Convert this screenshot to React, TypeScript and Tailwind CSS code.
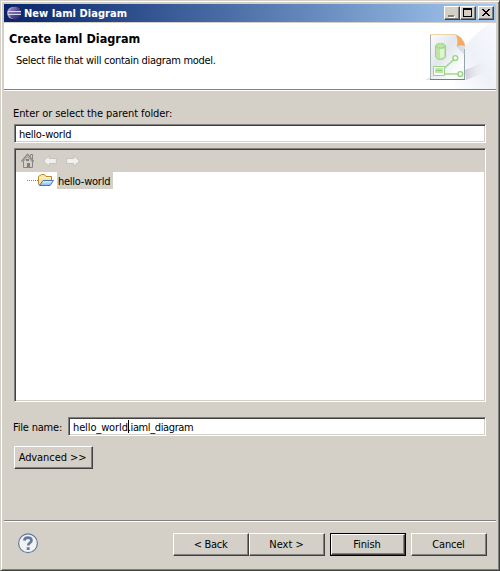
import React from "react";

const raised =
  "border border-t-white border-l-white border-r-[#404040] border-b-[#404040] shadow-[inset_-1px_-1px_0_#808080] bg-[#d4d0c8]";
const sunken =
  "border border-t-[#808080] border-l-[#808080] border-r-white border-b-white shadow-[inset_1px_1px_0_#404040,inset_-1px_-1px_0_#d4d0c8] bg-white";

function EclipseLogo() {
  return (
    <svg width="15" height="14" viewBox="0 0 15 14">
      <defs>
        <linearGradient id="orb" x1="0" y1="0" x2="1" y2="1">
          <stop offset="0" stopColor="#a596cc" />
          <stop offset="0.5" stopColor="#54498f" />
          <stop offset="1" stopColor="#292560" />
        </linearGradient>
      </defs>
      <ellipse cx="5.8" cy="7" rx="5.8" ry="6" fill="#b79bc4" />
      <ellipse cx="8" cy="7" rx="6" ry="6.2" fill="url(#orb)" />
      <path d="M1 5.5H14M1 8.5H14" stroke="#d5d7ec" />
      <path d="M2 7H14" stroke="#8580b4" />
    </svg>
  );
}

function WizardBanner() {
  return (
    <svg width="96" height="66" viewBox="400 23 96 66">
      <defs>
        <linearGradient id="sweep" x1="0" y1="1" x2="1" y2="0">
          <stop offset="0" stopColor="#fff" />
          <stop offset="0.5" stopColor="#eef1f8" />
          <stop offset="1" stopColor="#f9faff" />
        </linearGradient>
        <linearGradient id="sheet" x1="0" y1="0" x2="1" y2="1">
          <stop offset="0" stopColor="#fafbfa" />
          <stop offset="0.4" stopColor="#e2e7ee" />
          <stop offset="0.8" stopColor="#fcfdfd" />
          <stop offset="1" stopColor="#eef5f5" />
        </linearGradient>
        <linearGradient id="cast" x1="0" y1="0" x2="1" y2="0">
          <stop offset="0" stopColor="#d2cddd" />
          <stop offset="1" stopColor="#eff1f8" stopOpacity="0" />
        </linearGradient>
      </defs>
      <path d="M496 23H491Q477 31 465 46L452 89H496Z" fill="url(#sweep)" />
      <path d="M465 70L482 63Q492 64 484 73L466 80Z" fill="url(#cast)" />
      <path d="M425 80L431 77V80Z" fill="#e1e4eb" />
      <path d="M430.5 34.5H456L465 47V79.5H430.5Z" fill="url(#sheet)" />
      <path d="M430.5 79V34.5" stroke="#a9b3b5" />
      <path d="M430 34.5H456" stroke="#ecd3ad" />
      <path d="M464.5 49V80" stroke="#8fa5aa" />
      <path d="M430 79.5H465" stroke="#638887" />
      <path d="M455.5 34.5Q459 40 456.5 47Q461 44.5 465 46.5Q464 38 455.5 34.5Z" fill="#f3ab62" />
      <path d="M455.5 34.5Q464 38 465 46.5" fill="none" stroke="#e8bd91" strokeWidth=".7" />
      <path d="M457 47L464.5 55V47Q460 45 457 47Z" fill="#c9ced6" opacity=".6" />
      <path d="M435.5 46Q436 43.5 440.5 43.5T445.5 46V57Q444 59.5 440.5 59.5T435.5 57Z" fill="#bde5a5" stroke="#98d283" />
      <path d="M440 49H444V57L440 58Z" fill="#e0f4d4" />
      <path d="M436 46.5Q440.5 50 445 46.5" stroke="#98d283" fill="none" />
      <path d="M444.5 68L453.5 59.8M445 74H458" stroke="#a3da90" strokeWidth="1.6" />
      <path d="M433.5 66.5H444.5V75.5H433.5Z" fill="#f8fdf5" stroke="#98d283" />
      <path d="M435 68H443V73H435Z" fill="#c1e5b0" />
      <path d="M436 70.5H442" stroke="#8fca7b" />
      <circle cx="455.3" cy="58" r="2.4" fill="#f5fff0" stroke="#98d283" strokeWidth="1.4" />
      <circle cx="460.3" cy="74" r="2.4" fill="#f5fff0" stroke="#98d283" strokeWidth="1.4" />
    </svg>
  );
}

function HomeIcon() {
  return (
    <svg width="14" height="16" viewBox="0 0 14 16" fill="none" stroke="#858583">
      <path d="M0.5 8.5L6.5 1.2L12.7 8.5" strokeWidth="1.2" />
      <path d="M1.8 9L6.5 3.5L11.5 9" strokeWidth=".8" />
      <path d="M2.5 7.5V14.5H11.5V7.5M9.5 3.5V1.5H11.5V6.5" />
      <path d="M5 6H8V8H5ZM6 10H9V14H6Z" fill="#808080" stroke="none" />
    </svg>
  );
}

function ArrowIcon({ flip = false }: { flip?: boolean }) {
  return (
    <svg width="14" height="12" viewBox="0 0 14 12" className={flip ? "-scale-x-100" : ""}>
      <path d="M0.6 6L6.2 0.6V3.5H13.4V8.5H6.2V11.4Z" fill="#f1f0ec" stroke="#c2bfb8" strokeWidth=".9" />
    </svg>
  );
}

function FolderIcon() {
  return (
    <svg width="16" height="13" viewBox="0 0 16 13">
      <defs>
        <linearGradient id="flap" x1="0" y1="0" x2="0" y2="1">
          <stop offset="0" stopColor="#eef8ff" />
          <stop offset="1" stopColor="#82b7eb" />
        </linearGradient>
      </defs>
      <path d="M0.5 10.5V2.5L2 1.5L3.5 0.5H6.5L8 2.5H13.5V6L3 11.5Z" fill="#fbe7a0" stroke="#b58a3c" />
      <path d="M1 3.5H13" stroke="#fff8d6" />
      <path d="M5 6.5H15.5L12 11.5H1.5Z" fill="url(#flap)" stroke="#4870bb" />
    </svg>
  );
}

function WindowButton({ children }: { children: React.ReactNode }) {
  return (
    <div className={`flex h-[14px] w-4 shrink-0 ${raised}`}>
      <svg width="14" height="12" viewBox="0 0 14 12" shapeRendering="crispEdges">
        {children}
      </svg>
    </div>
  );
}

function Button({ label, text }: { label: string; text: string }) {
  return (
    <button className={`flex h-[23px] w-[76px] shrink-0 items-center justify-center whitespace-nowrap ${raised}`}>
      <span className={text}>{label}</span>
    </button>
  );
}

export default function App() {
  return (
    <div className="flex h-[571px] w-[500px] flex-col overflow-hidden border-t border-l border-t-[#d4d0c8] border-l-[#d4d0c8] border-r border-b border-r-[#404040] border-b-[#404040] bg-[#d4d0c8] pt-[3px] pr-[3px] pl-[3px] font-['DejaVu_Sans_Condensed','DejaVu_Sans',sans-serif] text-[11px] leading-[14px] text-black shadow-[inset_1px_1px_0_#fff,inset_-1px_-1px_0_#808080]">
      <header className="flex h-[18px] shrink-0 items-center bg-linear-to-r from-[#0a246a] to-[#a6caf0] pr-0.5 pl-[3px]">
        <EclipseLogo />
        <span className="ml-[2px] flex-1 pt-px text-[11px] font-bold tracking-[0.05px] text-white">New Iaml Diagram</span>
        <WindowButton>
          <path d="M3 8H9V10H3Z" fill="#808080" />
          <path d="M4 10H10V11H4ZM9 9H10V10H9Z" fill="#fff" />
        </WindowButton>
        <WindowButton>
          <path d="M2 1H11V10H2ZM3 3V9H10V3Z" fill="#000" fillRule="evenodd" />
        </WindowButton>
        <div className="w-0.5" />
        <WindowButton>
          <path
            d="M3 2h2v1H3ZM9 2h2v1H9ZM4 3h2v1H4ZM8 3h2v1H8ZM5 4h4v1H5ZM6 5h2v1H6ZM5 6h4v1H5ZM4 7h2v1H4ZM8 7h2v1H8ZM3 8h2v1H3ZM9 8h2v1H9Z"
            fill="#000"
          />
        </WindowButton>
      </header>
      <section className="mt-px flex h-[66px] shrink-0 justify-between bg-white">
        <div className="pt-[8px] pl-[5px]">
          <h1 className="text-[12.5px] leading-[15px] font-bold tracking-[0.02px]">Create Iaml Diagram</h1>
          <p className="mt-[7px] ml-[7px] pt-px tracking-[-0.3px]">Select file that will contain diagram model.</p>
        </div>
        <WizardBanner />
      </section>
      <div className="h-0.5 shrink-0 border-t border-b border-t-[#808080] border-b-white" />
      <main className="flex h-[429px] shrink-0 flex-col pt-[16px] pr-[10px] pl-[10px]">
        <label className="-ml-px h-[17px] shrink-0 tracking-[-0.09px]">Enter or select the parent folder:</label>
        <div className={`flex h-[19px] shrink-0 items-center pt-0.5 pl-[4px] tracking-[-0.25px] ${sunken}`}>hello-world</div>
        <div className={`mt-[5px] flex h-[254px] shrink-0 flex-col p-px ${sunken}`}>
          <div className="flex h-[22px] shrink-0 items-center bg-[#d4d0c8] pl-[5px]">
            <HomeIcon />
            <div className="ml-2 flex gap-[9px]">
              <ArrowIcon />
              <ArrowIcon flip />
            </div>
          </div>
          <div className="flex h-[17px] items-center pl-[11px]">
            <div className="w-[11px] border-t border-dotted border-[#808080]" />
            <FolderIcon />
            <span className="ml-[3px] flex h-[17px] w-14 items-center bg-[#d4d0c8] pt-0.5 pl-px tracking-[-0.25px]">hello-world</span>
          </div>
        </div>
        <div className="mt-[15px] flex h-[19px] shrink-0 items-center">
          <label className="-ml-px w-[55px] pt-0.5 tracking-[-0.2px] whitespace-nowrap">File name:</label>
          <div className={`flex h-[19px] flex-1 items-center pl-1 ${sunken}`}>
            <span className="pt-0.5 tracking-[-0.12px]">hello_world</span>
            <span className="-mr-px h-[13px] w-px bg-black" />
            <span className="pt-0.5 tracking-[-0.38px]">.iaml_diagram</span>
          </div>
        </div>
        <button className={`mt-[10px] h-[23px] w-[79px] shrink-0 pr-0.5 tracking-[-0.08px] whitespace-nowrap ${raised}`}>
          Advanced &gt;&gt;
        </button>
      </main>
      <div className="h-0.5 shrink-0 border-t border-b border-t-[#808080] border-b-white" />
      <footer className="flex pt-[11px] pr-[9px] pl-[14px]">
        <svg width="21" height="21" viewBox="0 0 21 21">
          <circle cx="10" cy="10.3" r="9.4" fill="#f2f2f4" stroke="#647a9d" strokeWidth="1.2" />
          <path d="M6.3 7.7Q6.5 4.6 10 4.6T13.5 7.4C13.5 9.8 10.2 9.7 10.2 12.6" fill="none" stroke="#647a9d" strokeWidth="2.6" />
          <path d="M8.7 14.2H11.6V17H8.7Z" fill="#647a9d" />
        </svg>
        <div className="ml-auto flex">
          <Button label="< Back" text="pr-px tracking-[-0.3px]" />
          <Button label="Next >" text="pr-px" />
          <div className="ml-[5px] flex h-[23px] w-[76px] border border-black bg-[#d4d0c8]">
            <button className={`flex-1 pr-0.5 leading-[14px] tracking-[-0.1px] ${raised}`}>Finish</button>
          </div>
          <div className="w-[5px]" />
          <Button label="Cancel" text="pr-px tracking-[-0.2px]" />
        </div>
      </footer>
    </div>
  );
}
